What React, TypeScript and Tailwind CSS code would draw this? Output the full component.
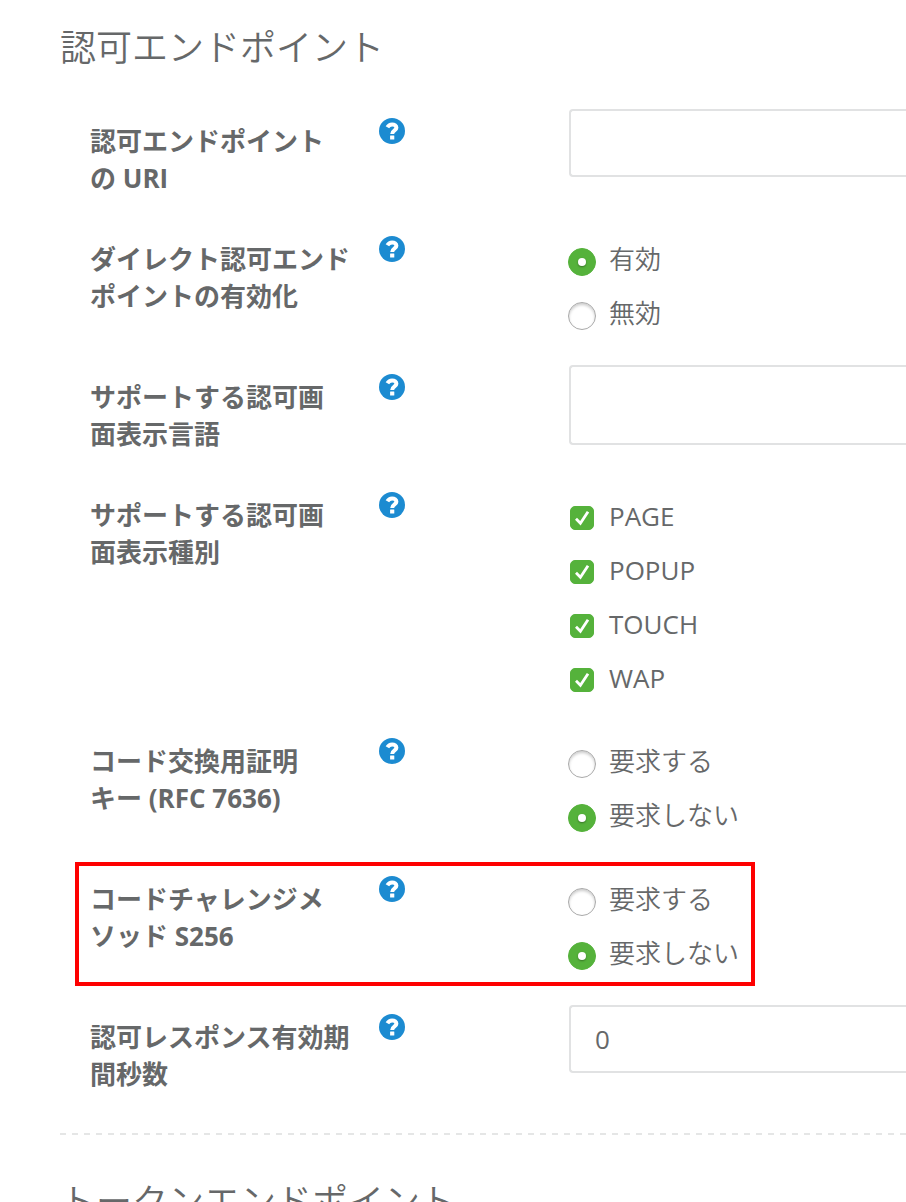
import { useState, type ReactNode } from "react";

type Option = { value: string; label: string };

const DIRECT_OPTIONS: Option[] = [
  { value: "enabled", label: "有効" },
  { value: "disabled", label: "無効" },
];

const REQUIRE_OPTIONS: Option[] = [
  { value: "required", label: "要求する" },
  { value: "optional", label: "要求しない" },
];

const DISPLAYS = ["PAGE", "POPUP", "TOUCH", "WAP"];

const inputClass =
  "ml-px block w-full rounded-l-sm border-2 border-r-0 border-[#e1e2e3] bg-white px-6 text-[26px] text-[#666869] outline-none focus:border-[#1c8bd1]";

function HelpIcon() {
  return (
    <svg viewBox="0 0 26 26" className="size-[26px]" fill="none" aria-hidden="true">
      <circle cx="13" cy="13" r="13" fill="#1c8bd1" />
      <path
        d="M8.4 9.3C9.5 7.4 11 6.5 13.1 6.5C15.6 6.5 17.4 7.9 17.4 9.8C17.4 12.6 13.2 12.3 13.2 16.1"
        stroke="#fff"
        strokeWidth="4"
      />
      <rect x="11.1" y="17.4" width="4.2" height="4.2" rx="0.4" fill="#fff" />
    </svg>
  );
}

type RowProps = {
  id: string;
  lines: [string, string];
  group?: boolean;
  highlight?: boolean;
  children: ReactNode;
};

function Row({ id, lines, group, highlight, children }: RowProps) {
  const text = (
    <>
      {lines[0]}
      <br />
      {lines[1]}
    </>
  );
  const labelClass = "block pt-[14px] text-[26px] leading-[37px] font-bold whitespace-nowrap";

  return (
    <div
      className="relative grid grid-cols-[289px_189px_1fr] pl-[30px]"
      role={group ? "group" : undefined}
      aria-labelledby={group ? `${id}-label` : undefined}
    >
      {highlight && (
        <div className="pointer-events-none absolute -top-[5px] left-[15px] h-[124px] w-[680px] border-4 border-[#fe0000]" />
      )}
      {group ? (
        <span id={`${id}-label`} className={labelClass}>{text}</span>
      ) : (
        <label htmlFor={id} className={labelClass}>{text}</label>
      )}
      <div className="pt-[9px]">
        <button type="button" className="block cursor-pointer rounded-full" aria-describedby={group ? `${id}-label` : undefined}>
          <HelpIcon />
        </button>
      </div>
      <div className="min-w-0">{children}</div>
    </div>
  );
}

type RadioListProps = {
  name: string;
  options: Option[];
  value: string;
  onChange: (value: string) => void;
};

function RadioList({ name, options, value, onChange }: RadioListProps) {
  return (
    <>
      {options.map((o) => (
        <label key={o.value} className="flex h-[54px] items-start gap-[13px] pt-[14px] text-[26px] leading-9 font-[350]">
          <input
            type="radio"
            name={name}
            value={o.value}
            checked={value === o.value}
            onChange={() => onChange(o.value)}
            className="mt-[7px] flex size-7 shrink-0 appearance-none items-center justify-center rounded-full border border-[#aaaaaa] bg-white shadow-[inset_0_2px_3px_rgba(0,0,0,0.2)] checked:border-[#55b23b] checked:bg-[#55b23b] checked:shadow-none checked:before:size-2 checked:before:rounded-full checked:before:bg-white checked:before:shadow-[0_1px_2px_rgba(0,0,0,0.35)] checked:before:content-['']"
          />
          <span>{o.label}</span>
        </label>
      ))}
    </>
  );
}

export default function App() {
  const [uri, setUri] = useState("");
  const [locales, setLocales] = useState("");
  const [duration, setDuration] = useState("0");
  const [direct, setDirect] = useState("enabled");
  const [pkce, setPkce] = useState("optional");
  const [s256, setS256] = useState("optional");
  const [displays, setDisplays] = useState<string[]>(DISPLAYS);

  const toggleDisplay = (name: string) => {
    setDisplays((prev) => (prev.includes(name) ? prev.filter((d) => d !== name) : [...prev, name]));
  };

  return (
    <main
      lang="ja"
      className="h-screen overflow-x-hidden overflow-y-auto bg-white pl-[60px] font-['Open_Sans','Noto_Sans_CJK_JP',sans-serif] text-[#666869] [scrollbar-width:none]"
    >
      <section className="pt-[21px] pb-10">
        <h2 className="text-4xl leading-[54px] font-[350]">認可エンドポイント</h2>

        <form className="mt-[34px] flex flex-col gap-[30px]" onSubmit={(e) => e.preventDefault()}>
          <Row id="authorization-uri" lines={["認可エンドポイント", "の URI"]}>
            <input
              id="authorization-uri"
              type="text"
              value={uri}
              onChange={(e) => setUri(e.target.value)}
              className={`${inputClass} h-[68px]`}
            />
          </Row>

          <Row id="direct" group lines={["ダイレクト認可エンド", "ポイントの有効化"]}>
            <RadioList name="direct" options={DIRECT_OPTIONS} value={direct} onChange={setDirect} />
          </Row>

          <Row id="locales" lines={["サポートする認可画", "面表示言語"]}>
            <input
              id="locales"
              type="text"
              value={locales}
              onChange={(e) => setLocales(e.target.value)}
              className={`${inputClass} h-20`}
            />
          </Row>

          <Row id="displays" group lines={["サポートする認可画", "面表示種別"]}>
            {DISPLAYS.map((name) => (
              <label key={name} className="flex h-[54px] items-start gap-[13px] pt-[15px] text-[26px] leading-9">
                <span className="relative mx-[2px] mt-2 size-6 shrink-0">
                  <input
                    type="checkbox"
                    checked={displays.includes(name)}
                    onChange={() => toggleDisplay(name)}
                    className="peer block size-6 appearance-none rounded-[5px] border border-[#aaaaaa] bg-white checked:border-[#55b23b] checked:bg-[#55b23b]"
                  />
                  <svg
                    viewBox="0 0 24 24"
                    className="pointer-events-none absolute inset-0 hidden size-6 peer-checked:block"
                    fill="none"
                    stroke="#fff"
                    strokeWidth="2.8"
                    aria-hidden="true"
                  >
                    <path d="M6 12.8 10.4 17.2 18 5.8" />
                  </svg>
                </span>
                <span>{name}</span>
              </label>
            ))}
          </Row>

          <Row id="pkce" group lines={["コード交換用証明", "キー (RFC 7636)"]}>
            <RadioList name="pkce" options={REQUIRE_OPTIONS} value={pkce} onChange={setPkce} />
          </Row>

          <Row id="s256" group highlight lines={["コードチャレンジメ", "ソッド S256"]}>
            <RadioList name="s256" options={REQUIRE_OPTIONS} value={s256} onChange={setS256} />
          </Row>

          <Row id="duration" lines={["認可レスポンス有効期", "間秒数"]}>
            <input
              id="duration"
              type="text"
              value={duration}
              onChange={(e) => setDuration(e.target.value)}
              className={`${inputClass} h-[68px]`}
            />
          </Row>
        </form>
      </section>

      <hr className="h-[2px] border-0 bg-[repeating-linear-gradient(to_right,#e5e6e6_0_6px,transparent_6px_12px)]" />

      <section className="pt-10">
        <h2 className="text-4xl leading-[54px] font-[350]">トークンエンドポイント</h2>
      </section>
    </main>
  );
}
